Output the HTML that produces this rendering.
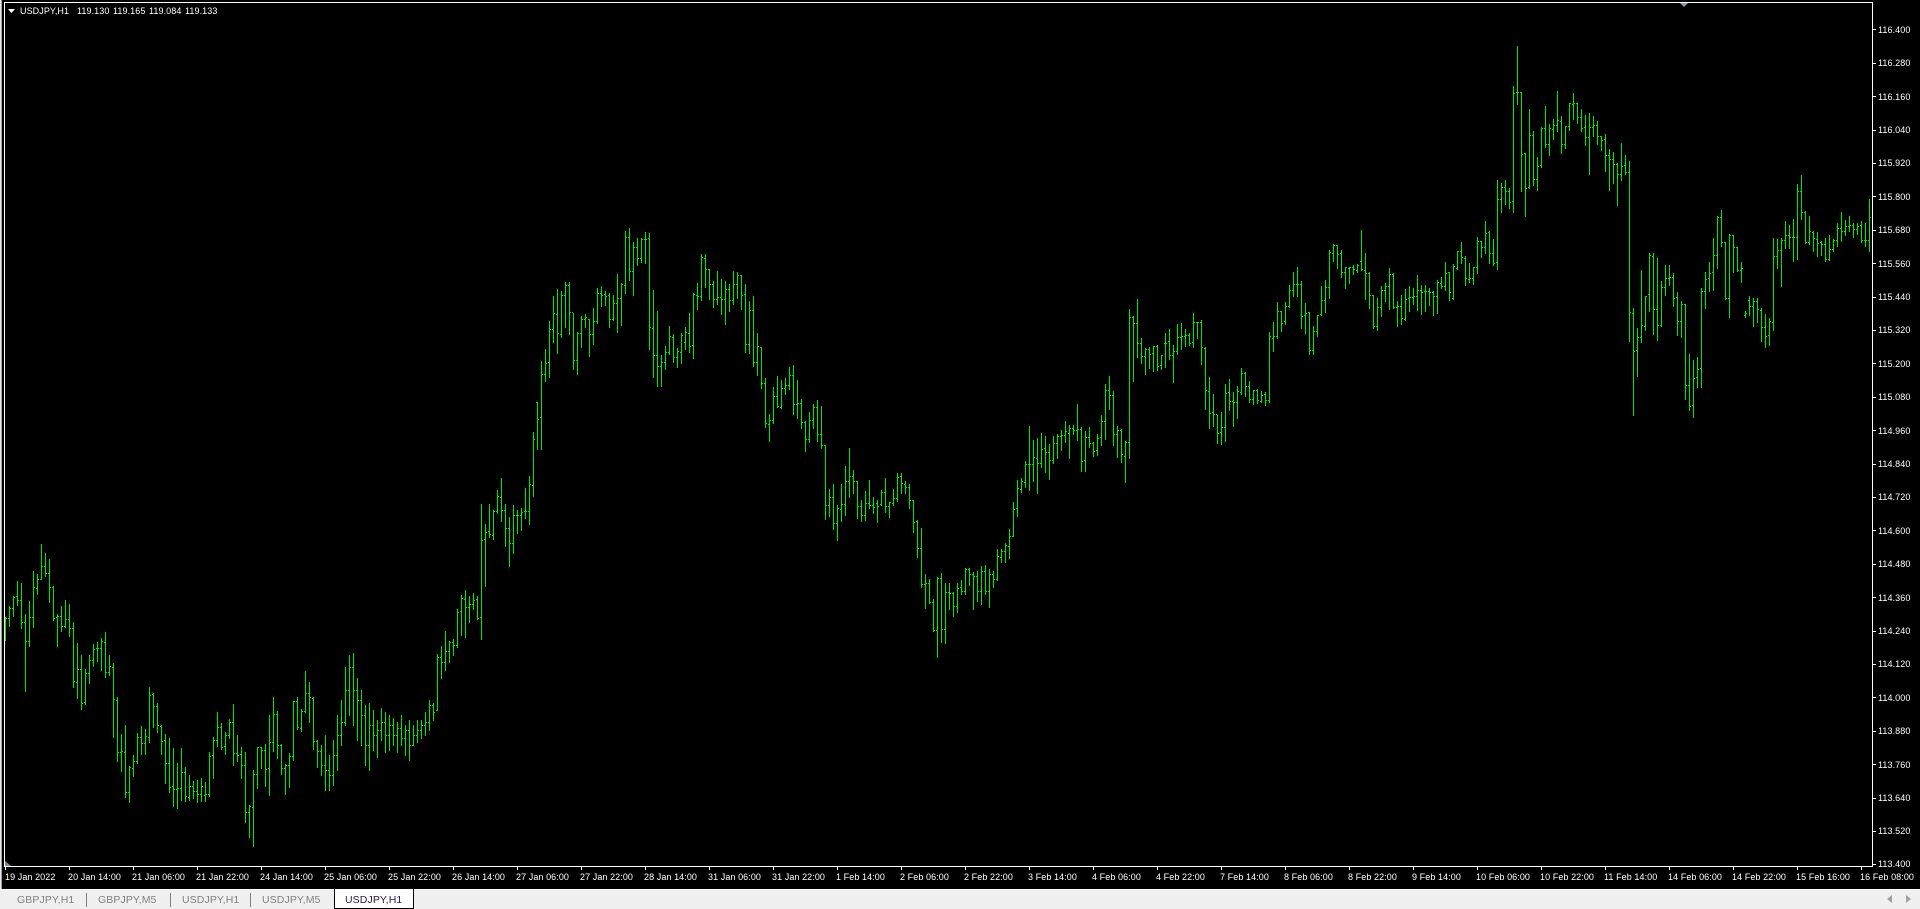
<!DOCTYPE html>
<html><head><meta charset="utf-8"><title>USDJPY,H1</title>
<style>
html,body{margin:0;padding:0;background:#000;width:1920px;height:909px;overflow:hidden}
svg{display:block;position:absolute;left:0;top:0}
text{font-family:"Liberation Sans",sans-serif;font-size:9px;fill:#fff;letter-spacing:.08px}
.t text{font-size:10.5px;fill:#808080;letter-spacing:.1px}
</style></head><body>
<svg width="1920" height="909" viewBox="0 0 1920 909" shape-rendering="crispEdges">
<rect width="1920" height="909" fill="#000"/>
<rect x="0" y="0" width="1" height="889" fill="#e8e8e8"/>
<rect x="1" y="0" width="1" height="889" fill="#a0a0a0"/>
<path id="bars" fill="none" stroke="#00e800" stroke-width="1"/>
<path d="M4.5 2V867M4 2.5H1873M1872.5 2V867M4 866.5H1873" stroke="#fff" fill="none"/>
<path d="M1873 29.5h3M1873 63.5h3M1873 96.5h3M1873 130.5h3M1873 163.5h3M1873 196.5h3M1873 230.5h3M1873 263.5h3M1873 297.5h3M1873 330.5h3M1873 363.5h3M1873 397.5h3M1873 430.5h3M1873 464.5h3M1873 497.5h3M1873 530.5h3M1873 564.5h3M1873 597.5h3M1873 631.5h3M1873 664.5h3M1873 697.5h3M1873 731.5h3M1873 764.5h3M1873 798.5h3M1873 831.5h3M1873 864.5h3" stroke="#fff"/>
<path d="M5.5 867v3M69.5 867v3M133.5 867v3M197.5 867v3M261.5 867v3M325.5 867v3M389.5 867v3M453.5 867v3M517.5 867v3M581.5 867v3M645.5 867v3M709.5 867v3M773.5 867v3M837.5 867v3M901.5 867v3M965.5 867v3M1029.5 867v3M1093.5 867v3M1157.5 867v3M1221.5 867v3M1285.5 867v3M1349.5 867v3M1413.5 867v3M1477.5 867v3M1541.5 867v3M1605.5 867v3M1669.5 867v3M1733.5 867v3M1797.5 867v3M1861.5 867v3" stroke="#fff"/>
<g shape-rendering="auto">
<polygon points="8,9 15,9 11.5,13" fill="#fff"/>
<polygon points="1680,3 1688,3 1684,7" fill="#8a98a8"/>
<polygon points="5,861 5,866 11,866" fill="#7a8a9a"/>
<text x="20" y="14">USDJPY,H1</text>
<text x="77" y="14">119.130</text><text x="113" y="14">119.165</text><text x="149" y="14">119.084</text><text x="185" y="14">119.133</text>
<text x="1878" y="33">116.400</text><text x="1878" y="66">116.280</text><text x="1878" y="100">116.160</text><text x="1878" y="133">116.040</text><text x="1878" y="166">115.920</text><text x="1878" y="200">115.800</text><text x="1878" y="233">115.680</text><text x="1878" y="267">115.560</text><text x="1878" y="300">115.440</text><text x="1878" y="333">115.320</text><text x="1878" y="367">115.200</text><text x="1878" y="400">115.080</text><text x="1878" y="434">114.960</text><text x="1878" y="467">114.840</text><text x="1878" y="500">114.720</text><text x="1878" y="534">114.600</text><text x="1878" y="567">114.480</text><text x="1878" y="601">114.360</text><text x="1878" y="634">114.240</text><text x="1878" y="667">114.120</text><text x="1878" y="701">114.000</text><text x="1878" y="734">113.880</text><text x="1878" y="768">113.760</text><text x="1878" y="801">113.640</text><text x="1878" y="834">113.520</text><text x="1878" y="867">113.400</text>
<text x="5" y="880">19 Jan 2022</text><text x="68" y="880">20 Jan 14:00</text><text x="132" y="880">21 Jan 06:00</text><text x="196" y="880">21 Jan 22:00</text><text x="260" y="880">24 Jan 14:00</text><text x="324" y="880">25 Jan 06:00</text><text x="388" y="880">25 Jan 22:00</text><text x="452" y="880">26 Jan 14:00</text><text x="516" y="880">27 Jan 06:00</text><text x="580" y="880">27 Jan 22:00</text><text x="644" y="880">28 Jan 14:00</text><text x="708" y="880">31 Jan 06:00</text><text x="772" y="880">31 Jan 22:00</text><text x="836" y="880">1 Feb 14:00</text><text x="900" y="880">2 Feb 06:00</text><text x="964" y="880">2 Feb 22:00</text><text x="1028" y="880">3 Feb 14:00</text><text x="1092" y="880">4 Feb 06:00</text><text x="1156" y="880">4 Feb 22:00</text><text x="1220" y="880">7 Feb 14:00</text><text x="1284" y="880">8 Feb 06:00</text><text x="1348" y="880">8 Feb 22:00</text><text x="1412" y="880">9 Feb 14:00</text><text x="1476" y="880">10 Feb 06:00</text><text x="1540" y="880">10 Feb 22:00</text><text x="1604" y="880">11 Feb 14:00</text><text x="1668" y="880">14 Feb 06:00</text><text x="1732" y="880">14 Feb 22:00</text><text x="1796" y="880">15 Feb 16:00</text><text x="1860" y="880">16 Feb 08:00</text>
</g>
<rect x="0" y="889" width="1920" height="20" fill="#f0f0f0"/>
<rect x="0" y="889" width="1920" height="1" fill="#fff"/>
<path d="M86.5 893V907M170.5 893V907M250.5 893V907" stroke="#808080"/>
<rect x="334" y="889" width="80" height="20" fill="#000"/>
<rect x="335" y="889" width="78" height="19" fill="#fff"/>
<g class="t" shape-rendering="auto">
<text x="17" y="903">GBPJPY,H1</text><text x="98" y="903">GBPJPY,M5</text><text x="182" y="903">USDJPY,H1</text><text x="262" y="903">USDJPY,M5</text>
<text x="345" y="903" style="fill:#2a1a40">USDJPY,H1</text>
<polygon points="1892,895 1892,903 1887,899" fill="#a0a0a0"/>
<polygon points="1906,895 1906,903 1911,899" fill="#a0a0a0"/>
</g>
</svg>
<script>
var G=[
[0,530,3,[262,330,265,265,229,287,263,235,198,258,235,200,153,225,198,211,159,294,211,277,252,483,277,334,213,348,334,262,123,291,262,172,132,192,175,148,42,148,148,109,69,138,109,130,87,216,130,172,168,270,172,264,252,348,262,259,228,303,259,289,210,291,289,268,222,318,268,295,276,471,295,454,339,504,457,418,375,537,418,518,417,522,516,430,375,459,430,391,342,408,391,358,336,393,355,355,324,420,355,334,306,441,337,427,375,435,427,409,399,621,411,508,501,693,511,667,612,723,667,664,585,801,667,787,708,816,787,712,675,738,715,694,609,699,694,620,588,672,620,640,597,672,640,619,471,636,622,495,489,591,492,529,519,606,529,586,585,672,589,633,612,759,631,700,624,786,700,772,654,828,769,778,699,834,778,775,654,810,775,727,711,813,727,799,735,810,802,769,753,804,769,784,750,816,784,793,744,813,793,769,756,813,796,793,666,798,793,679,621,744,676,631,546,648,631,592,579,657,592,652,606,672,649,616,567,624,616,577,522,705,577,670,615,693,670,676,651,744,673,706,666,876,706,847,825,921,847,829,720,948,832,733,651,774,733,652,651,714,652,661,642,768,661,718,555,795,715,637,501,663,637,553,543,684,553,646,642,732,646,715,702,792,715,706,669,771,706,679,513,690,679,514,501,597,514,590,537,603,595,544,423,546,544,490,456,576,490,502,501,657,504,634,630,711,634,664]],
[79,0,1,[745,775,751,765,735,790,765,770,755,790,770,775,740,785,775,755,715,770,755,735,700,745,735,722,667,725,722,690,655,715,690,667,653,725,667,690,678,740,690,700,690,745,700,715,705,765,715,745,703,770,745,725,710,750,725,735,720,757,735,730,708,740,730,722,712,752,722,735,715,750,735,725,718,745,725,735,722,752,735,728,715,745,728,738,725,755,738,730,720,760,730,745,725,745,745,735,720,742,735,730,720,738,730,725,712,735,725,722,700,730,722,705,703,720,705,712]],
[108,480,3,[522,690,690,532,498,594,532,547,453,570,547,514,483,546,514,487,477,525,487,496,387,501,496,397,345,465,394,355,330,471,358,382,348,426,382,373,339,387,373,361,348,417,358,415,72,477,412,181,132,318,178,157,72,171,154,163,90,177,166,94,30,99,94,49,-6,123,52,91,72,198,91,145,111,258,145,190,75,219,190,106,90,159,106,106,84,150,106,97,24,114,94,94,-12,132,94,13,-144,48,16,-123]],
[133,220,3,[546,687,546,597,423,687,592,463,387,483,463,430,303,471,427,328,228,366,328,280,207,399,283,340,213,351,343,226,186,321,226,196,186,342,196,277,280,447,277,421,336,462,421,340,288,381,340,298,282,321,298,292,298,408,298,343,264,372,343,304,204,309,304,220,198,258,220,226,213,255,223,229,219,321,226,298,225,300,298,250,162,336,250,235,189,315,235,193,33,219,196,52,24,180,52,154,66,225,154,82,54,135,82,115,54,126,115,58,36,129,58,58,39,387,55,322,210,471,325,406,273,498,406,439,405,498,439,427,378,447,427,397,318,402,397,349,342,426,352,412,384,441,412,394,339,429,397,346,321,387,367,337,279,396,340,379,219,414,376,223,189,267,226,229,102,240,229,112,102,201,115,148,148,237,148,193,183,261,193,238,153,252,238,232,177,282,232,238,183,312,238,208,192,273,208,241,153,252,241,193,156,234,193,166,165,267,166,226,192,396,223,373,243,399,373,271,228,438,271,427,339,465,427,379,382,504,382,490]],
[190,400,3,[-66,81,-50,70,42,123,73,61,-39,69,61,-11,-72,20,-11,19,-60,23,21,-35,-66,-18,-35,-44,-99,-33,-44,-74,-105,42,-74,13,-60,54,13,10,-3,84,10,67,63,153,67,118,36,126,118,60,12,84,60,20,0,123,20,103,18,144,103,136,135,357,136,316,267,348,316,291,252,387,291,370,315,420,370,325,252,363,328,312,198,345,312,244,144,291,244,229,210,279,229,244,244,354,244,319,300,363,319,346,273,360,346,310,240,324,310,316,291,339,316,322,300,366,310,319,270,315,313,277,234,336,277,319,306,351,319,307,267,315,310,295,219,303,295,232,219,279,229,250,243,279,253,262,252,324,262,301,300,396,301,367,360,471,364,445,384,561,445,553,522,624,553,550,537,609,550,607,597,693,607,691,531,771,691,535,519,726,535,688,549,729,688,577,549,627,577,580,576,648,580,619,549,636,619,565,540,582,562,574,504,582,574,508,504,555,508,523,516,627,523,529,513,603,529,574,498,612,574,514,495,582,514,574,507,621,574,523,513,561,523,538,447,540,538,469,447,486,472,454,429,486,454,436,387,474,439,409,306,409,409,328,240,348,325,265,234,276,268,244,183,261,247,193,78,270,193,193,120,243,193,172,114,279,175,190,99,201,190,148,108,216,145,157,132,237,157,181,108,189,181,130,102,174,130,109,90,150,109,106,63,126,106,94,75,174,100,85,75,102,85,91,12,120,91,88,81,213,88,184,93,213,181,112,81,141,112,130,126,168,130,154,102,165,151,115]],
[274,220,3,[585,675,652,604,492,657,604,511,468,567,511,526,513,675,526,643,618,711,643,631,627,726,631,703,663,786,709,667,267,714,667,292,288,483,292,310,237,411,310,370,354,429,370,409,384,462,409,388,381,444,388,403,378,453,400,379,375,450,379,439,405,447,436,406,339,441,370,370,327,417,364,406,375,486,406,394,312,402,394,352,309,387,352,349,327,378,349,346,339,375,345,370,279,381,367,307,306,354,307,307,300,432,307,382,381,567,385,511,471,624,514,580,522,618,577,583,585,669,583,640,576,672,637,622,492,663,622,520,477,570,517,544,516,618,544,547,498,594,547,514,444,522,517,460,456,528,460,499,483,546,499,538,510,552,538,511,508,549,511,541,513,546,544,526,517,555,523,541,336,546,541,349,306,393,355,349,246,354,349,274,273,333,274,310,246,312,304,259,195,261,259,211,156,228,211,193,141,228,193,193,183,324,193,289,249,339,286,280,276,402,277,391,318,402,391,334,285,348,334,286,198,285,283,241,180,276,241,202,91,234,202,97,72,123,100,76,75,144,76,103,90,171,100,157,141,204,157,142,141,189,145,142,135,162,142,148,132,156,151,135,30,150,124,148,99,237,151,160,156,264,160,226,226,324,226,319,234,330,319,262,198,288,262,211,189,243,211,199,144,267,199,163,160,264,163,262,243,318,262,259,225,312,259,295,207,300,298,238,198,273,235,232,204,252,232,229,165,270,229,211,195,282,211,216,195,273,214,214,204,255,214,217,213,285,217,229,180,279,229,187,171,204,190,199,126,210,199,160,156,240,157,217,132,237,235,139,93,147,145,94,66,129,94,112,108,195,115,175,129,186,178,175,141,192,175,142,51,159,142,64,63,111,64,82,3,99,82,40,33,129,37,100,57,135,100,130,-120,147,127,-63]],
[374,40,3,[429,516,478,442,420,492,442,454,444,504,454,487,138,516,484,160,18,192,157,157,156,453,157,343,340,528,340,445,207,444,442,286,273,435,286,418,351,450,418,379,261,381,376,265,198,321,265,313,252,345,313,265,237,297,268,256,153,273,256,241,228,339,244,313,258,324,313,259,189,270,259,190,159,237,193,190,190,249,190,232,207,273,232,265,225,315,262,292,219,402,292,262,228,288,262,256,243,312,256,289,288,330,289,301,282,393,298,346,327,450,346,358,336,429,358,373,369,495,373,403,309,420,403,379,345,402,376,397]],
[406,170,3,[-27,513,7,427,414,735,430,544,474,618,541,502,300,516,502,466,378,480,469,379,249,423,373,255,249,492,259,418,264,510,418,466,333,468,466,352,285,375,352,325,285,345,325,322,309,408,322,385,366,495,382,454,393,501,454,403,402,687,403,646,552,720,646,709,570,741,706,625,561,651,622,598,354,651,595,364,306,414,364,328,276,363,325,310,204,360,307,256,138,294,256,142,120,228,142,217,216,387,217,385,192,441,385,196,195,306,196,232,231,303,232,301,276,336,301,295,423,441,436,430,378,435,391,409,384,468,409,394,384,456,394,418,414,513,421,472,432,531,472,499,444,525,496,454,204,480,457,259,207,294,259,241,204,348,241,211,153,234,211,196,165,234,196,202,147,273,202,202,42,267,202,64,15,147,64,127,123,219,127,217,138,222,217,184,183,243,187,205,186,258,208,220,213,255,217,223,204,273,223,268,195,270,268,238,207,243,238,211,159,228,211,175,126,213,175,184,150,195,184,169,138,184,169,166,159,201,166,178,159,192,178,169,154,216,166,211,160,228,211,211,87,243,211,142]]
];
var d="";
G.forEach(function(g){
  var s=g[0],oy=g[1],k=g[2],a=g[3];
  for(var n=0;n<a.length/4;n++){
    var x=5+4*(s+n),f=function(v){return Math.round(oy+v/k)};
    var t=f(a[n*4]),b=f(a[n*4+1]),o=f(a[n*4+2]),c=f(a[n*4+3]);
    d+="M"+(x+.5)+" "+t+"V"+(b+1)+"M"+(x-1)+" "+(o+.5)+"h1M"+(x+1)+" "+(c+.5)+"h1";
  }
});
document.getElementById("bars").setAttribute("d",d);
</script>
</body></html>
